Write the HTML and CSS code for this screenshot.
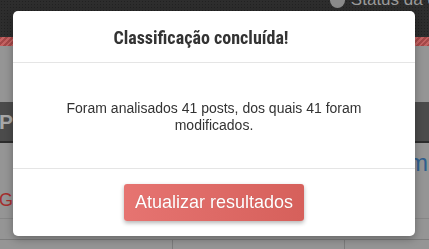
FILE: index.html
```html
<!DOCTYPE html>
<html lang="pt">
<head>
<meta charset="utf-8">
<title>Classificação concluída</title>
<link rel="stylesheet" href="styles.css">
</head>
<body>
<div class="page">
  <header class="topbar">
    <div class="status"><span class="status-dot"></span><span class="status-text">Status da conta</span></div>
  </header>
  <div class="stripes"></div>
  <main class="content">
    <div class="gap"></div>
    <div class="titlebar"><span class="titlebar-text">Painel</span></div>
    <div class="row-link"><span class="link">Sistem</span></div>
    <div class="row-go"><span class="go">Go</span></div>
    <div class="row-line"></div>
    <div class="grid-row"><div class="cell"></div><div class="cell"></div><div class="cell"></div></div>
  </main>
</div>

<div class="modal" role="dialog" aria-labelledby="modal-title">
  <div class="modal-header">
    <h2 class="modal-title" id="modal-title">Classificação concluída!</h2>
  </div>
  <div class="modal-body">
    <p class="modal-text">Foram analisados 41 posts, dos quais 41 foram modificados.</p>
  </div>
  <div class="modal-footer">
    <button class="btn-update" type="button">Atualizar resultados</button>
  </div>
</div>
</body>
</html>
```

FILE: styles.css
```css
html, body {
  margin: 0;
  padding: 0;
  height: 100%;
  overflow: hidden;
}
body {
  background: #959595;
  font-family: "Liberation Sans", Arial, sans-serif;
}
.page {
  width: 100%;
}
.topbar {
  height: 37px;
  background-color: #2d2d2d;
  background-image: radial-gradient(#212121 0.8px, transparent 1px);
  background-size: 3px 3px;
  display: flex;
  justify-content: flex-end;
  align-items: flex-start;
  overflow: hidden;
}
.status {
  display: flex;
  align-items: center;
  gap: 6px;
  margin-top: -10px;
  margin-right: -40px;
  white-space: nowrap;
}
.status-dot {
  width: 15px;
  height: 15px;
  border-radius: 50%;
  background: #8a8a8a;
}
.status-text {
  color: #9a9a9a;
  font-size: 17px;
}
.stripes {
  height: 9px;
  background: repeating-linear-gradient(135deg, #a54848 0, #a54848 2px, #c46262 2px, #c46262 4px);
}
.content {
  background: #959595;
}
.gap {
  height: 56px;
}
.titlebar {
  height: 39px;
  background: #4b4b4b;
  border-bottom: 2px solid #2c2c2c;
  display: flex;
  align-items: center;
  overflow: hidden;
}
.titlebar-text {
  color: #a8a8a8;
  font-weight: bold;
  font-size: 21px;
  margin-left: -1px;
}
.row-link {
  height: 40px;
  display: flex;
  justify-content: flex-end;
  align-items: center;
  overflow: hidden;
}
.link {
  color: #2f5f8e;
  font-size: 24px;
  margin-right: 1px;
}
.row-go {
  height: 35px;
  display: flex;
  align-items: center;
  overflow: hidden;
}
.go {
  color: #a52e2e;
  font-size: 18px;
  margin-left: -1px;
}
.row-line {
  height: 20px;
  border-top: 1px solid #868686;
}
.grid-row {
  display: grid;
  grid-template-columns: 172px 172px 1fr;
  height: 20px;
  border-top: 1px solid #7c7c7c;
}
.cell + .cell {
  border-left: 1px solid #7c7c7c;
}

.modal {
  position: fixed;
  left: 13px;
  top: 11px;
  width: 402px;
  height: 225px;
  background: #fff;
  border-radius: 5px;
  box-shadow: 0 3px 8px rgba(0, 0, 0, 0.3);
  display: flex;
  flex-direction: column;
  overflow: hidden;
}
.modal-header {
  height: 51px;
  border-bottom: 1px solid #e5e5e5;
  display: flex;
  align-items: center;
  justify-content: center;
  padding-right: 26px;
}
.modal-title {
  margin: 0;
  font-family: "Liberation Sans Narrow", "Roboto Condensed", "DejaVu Sans Condensed", "Liberation Sans", sans-serif;
  font-stretch: condensed;
  font-weight: bold;
  font-size: 18px;
  color: #333;
  padding-top: 2px;
}
.modal-body {
  flex: 1;
  display: flex;
  align-items: center;
  justify-content: center;
  padding: 3px 40px 0;
}
.modal-text {
  margin: 0;
  text-align: center;
  font-size: 14px;
  line-height: 17px;
  color: #333;
}
.modal-footer {
  border-top: 1px solid #e5e5e5;
  display: flex;
  justify-content: center;
  align-items: flex-start;
  padding-top: 15px;
  box-sizing: border-box;
  height: 68px;
}
.btn-update {
  width: 180px;
  height: 37px;
  border: none;
  border-radius: 3px;
  background: linear-gradient(to right, #e67471, #d6605b);
  box-shadow: 0 2px 4px rgba(0, 0, 0, 0.3);
  color: #fff;
  font-family: "Liberation Sans", Arial, sans-serif;
  font-size: 18px;
  padding: 0;
  cursor: pointer;
  text-shadow: 0 0 1px rgba(0, 0, 0, 0.15);
}
```
